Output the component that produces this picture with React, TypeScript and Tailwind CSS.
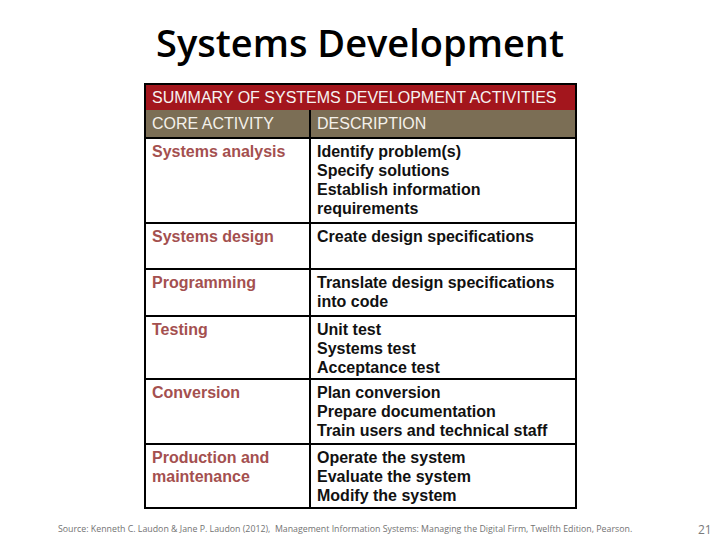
import React from "react";

const rows: { a: string[]; d: string[]; h: string }[] = [
  { a: ["Systems analysis"], d: ["Identify problem(s)", "Specify solutions", "Establish information", "requirements"], h: "h-[85px]" },
  { a: ["Systems design"], d: ["Create design specifications"], h: "h-[46px]" },
  { a: ["Programming"], d: ["Translate design specifications", "into code"], h: "h-[47px]" },
  { a: ["Testing"], d: ["Unit test", "Systems test", "Acceptance test"], h: "h-[63px]" },
  { a: ["Conversion"], d: ["Plan conversion", "Prepare documentation", "Train users and technical staff"], h: "h-[65px]" },
  { a: ["Production and", "maintenance"], d: ["Operate the system", "Evaluate the system", "Modify the system"], h: "h-[64px]" },
];

export default function App() {
  return (
    <div className="w-[720px] h-[540px] bg-white flex flex-col overflow-hidden">
      <div
        className="mt-[20px] h-[44px] leading-[44px] text-center text-[38px] font-semibold text-black"
        style={{ fontFamily: '"Open Sans", sans-serif' }}
      >
        Systems Development
      </div>
      <div
        className="mt-[19px] ml-[144px] w-[433px] border-2 border-black flex flex-col text-[16px] leading-[19px]"
        style={{ fontFamily: '"Liberation Sans", Arial, sans-serif' }}
      >
        <div className="h-[25px] bg-[#a3161d] text-[#f6f2f0] pl-[6px] flex items-center">
          SUMMARY OF SYSTEMS DEVELOPMENT ACTIVITIES
        </div>
        <div className="h-[27px] bg-[#7b6e55] text-[#f4f1ea] flex">
          <div className="w-[163px] pl-[6px] flex items-center">CORE ACTIVITY</div>
          <div className="w-[2px] bg-black" />
          <div className="flex-1 pl-[6px] flex items-center">DESCRIPTION</div>
        </div>
        {rows.map((r, i) => (
          <div key={i} className={`${r.h} border-t-2 border-black flex`}>
            <div className="w-[163px] pl-[6px] pt-[3px] font-bold text-[#a4504f]">
              {r.a.map((t, j) => (
                <div key={j}>{t}</div>
              ))}
            </div>
            <div className="w-[2px] bg-black" />
            <div className="flex-1 pl-[6px] pt-[3px] font-bold text-[#111111]">
              {r.d.map((t, j) => (
                <div key={j}>{t}</div>
              ))}
            </div>
          </div>
        ))}
      </div>
      <div className="mt-[14px] h-[14px] flex items-center">
        <div
          className="ml-[58px] w-[600px] text-[8.8px] text-[#737373] whitespace-nowrap"
          style={{ fontFamily: '"Open Sans", sans-serif' }}
        >
          Source: Kenneth C. Laudon &amp; Jane P. Laudon (2012),&nbsp; Management Information Systems: Managing the Digital Firm, Twelfth Edition, Pearson.
        </div>
        <div
          className="ml-[40px] text-[12px] text-[#7a7a7a]"
          style={{ fontFamily: '"Open Sans", sans-serif' }}
        >
          21
        </div>
      </div>
    </div>
  );
}
